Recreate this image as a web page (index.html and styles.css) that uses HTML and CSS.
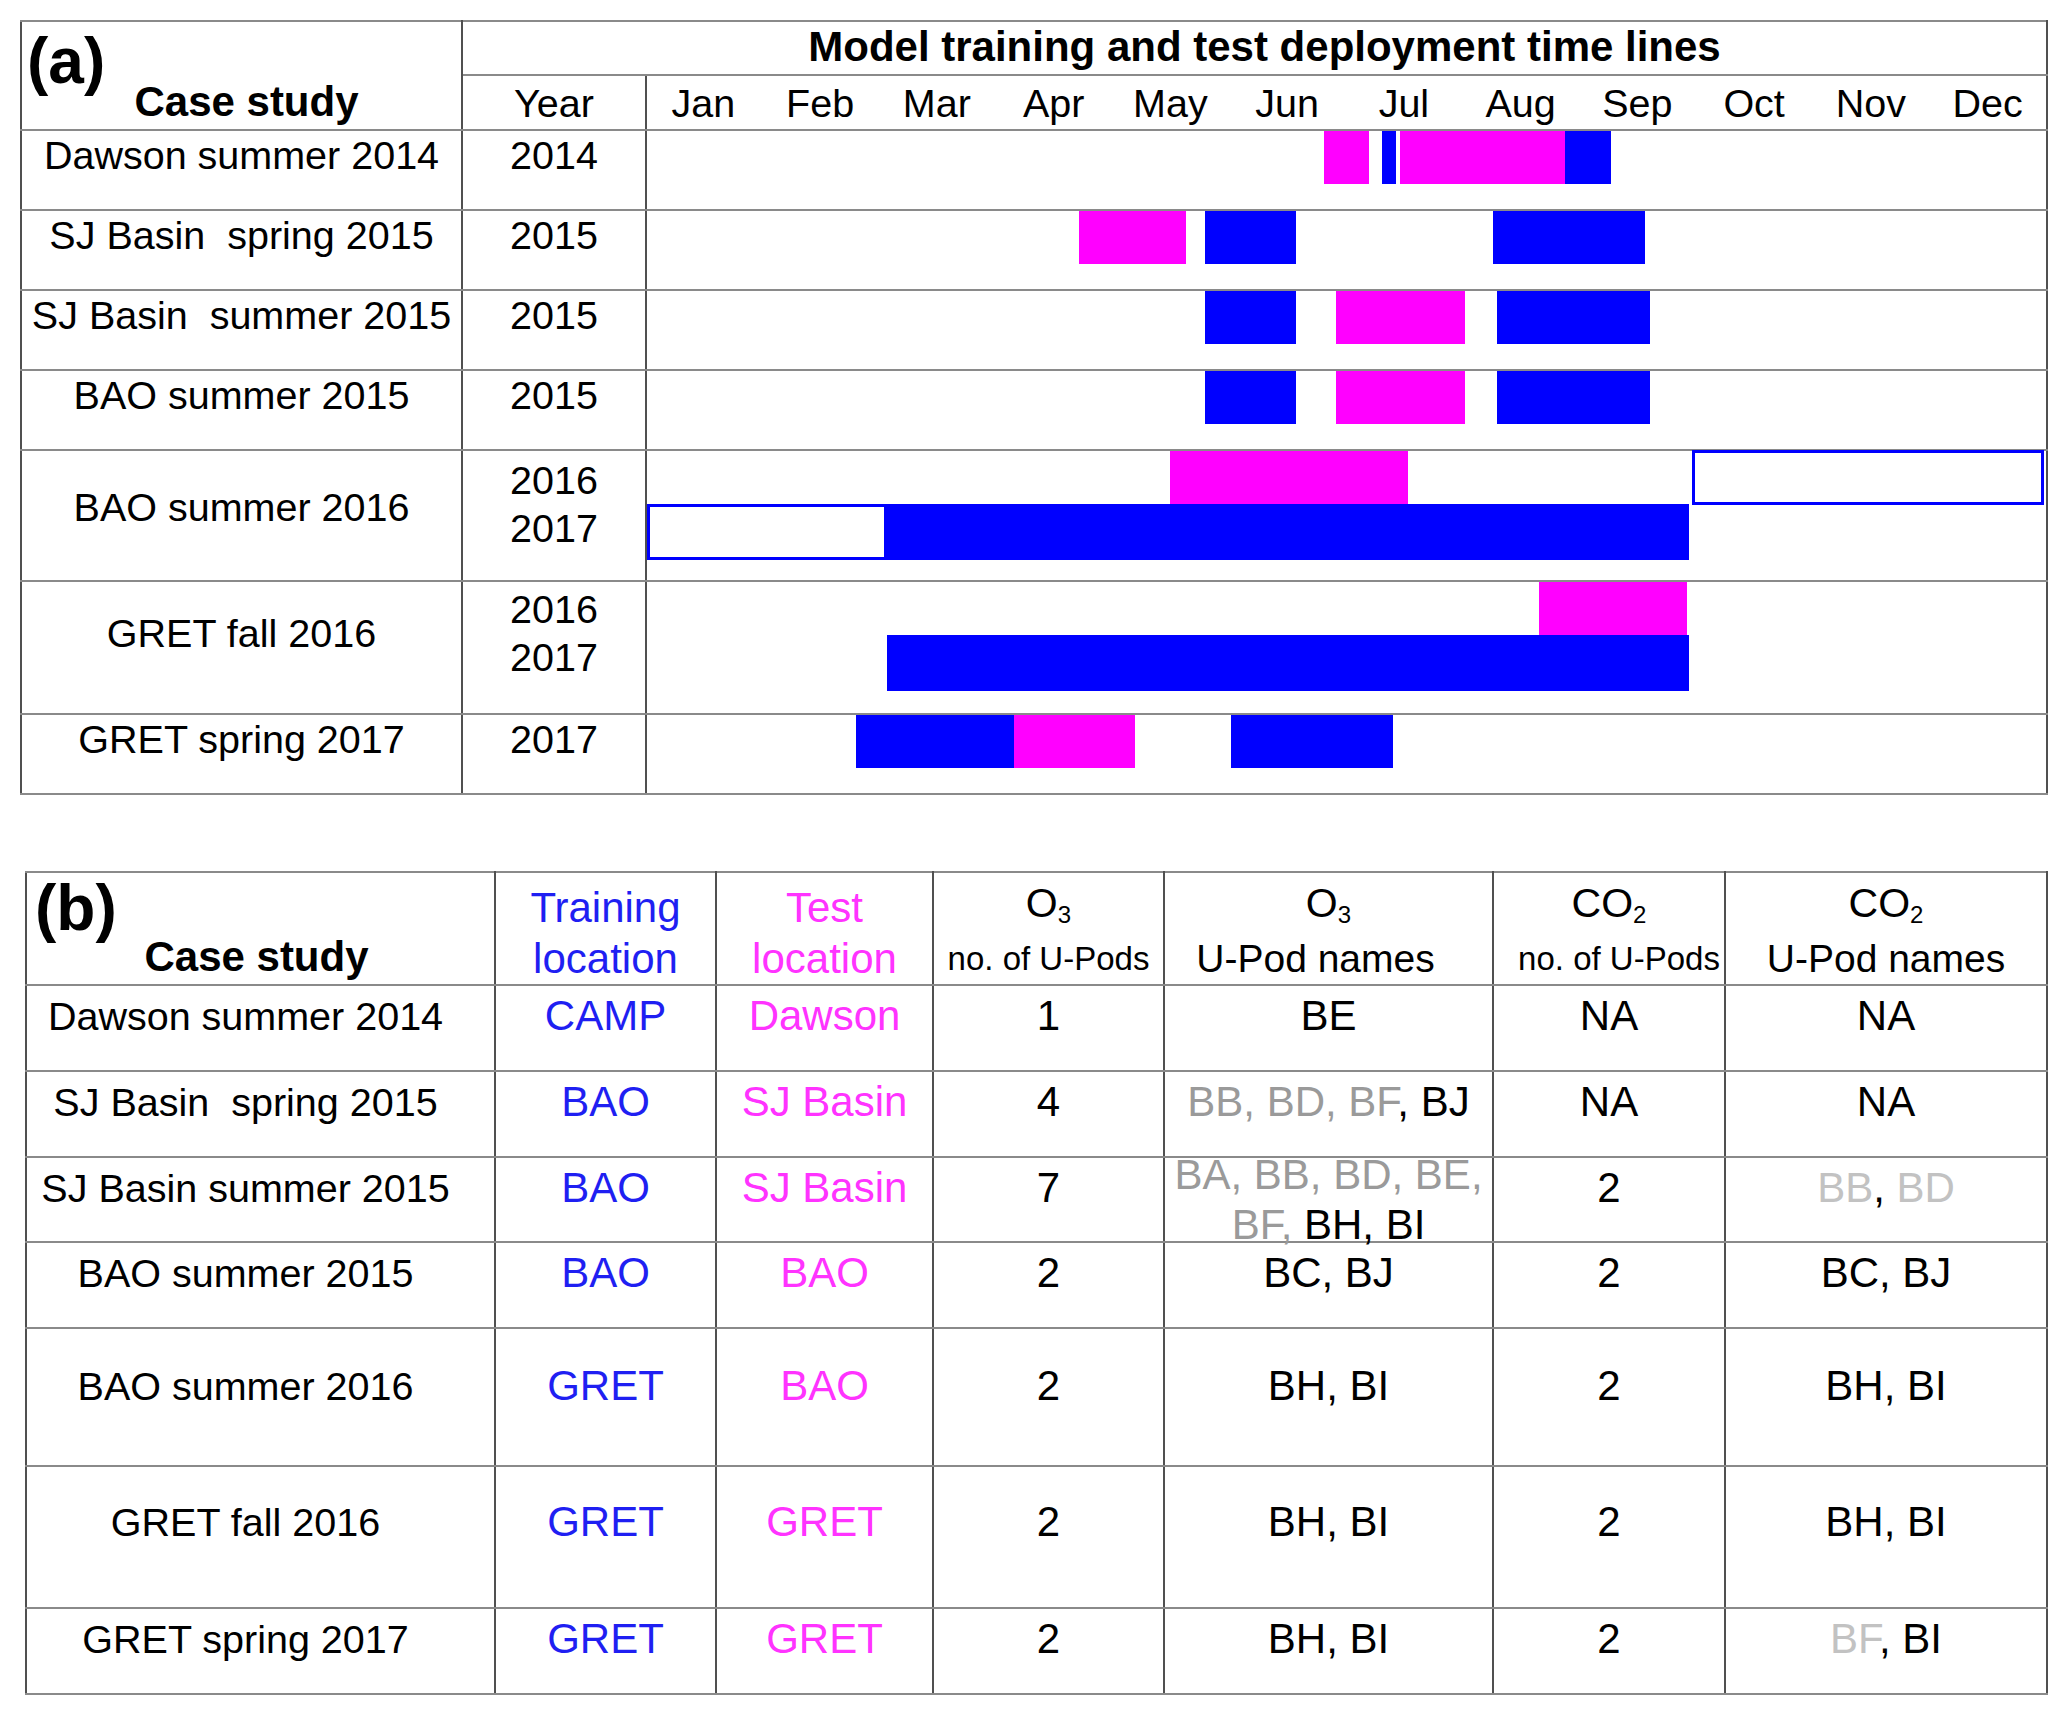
FILE: index.html
```html
<!DOCTYPE html>
<html lang="en">
<head>
<meta charset="utf-8">
<title>Model training and test deployment time lines</title>
<link rel="stylesheet" href="styles.css">
</head>
<body>
<main class="page">
  <table class="timeline">
    <colgroup><col class="c-case"><col class="c-year"><col class="c-chart"></colgroup>
    <tr class="title-row">
      <td class="case-head" rowspan="2"><span class="panel">(a)</span><span class="head-text">Case study</span></td>
      <td class="title" colspan="2">Model training and test deployment time lines</td>
    </tr>
    <tr class="month-row">
      <td class="year-head">Year</td>
      <td class="months-cell">
        <div class="months">
          <span>Jan</span><span>Feb</span><span>Mar</span><span>Apr</span><span>May</span><span>Jun</span>
          <span>Jul</span><span>Aug</span><span>Sep</span><span>Oct</span><span>Nov</span><span>Dec</span>
        </div>
      </td>
    </tr>
    <tr>
      <td class="label">Dawson summer 2014</td>
      <td class="year">2014</td>
      <td class="chart"><div class="track">
        <span class="bar test" style="left:677px;width:45px"></span>
        <span class="bar train" style="left:735px;width:14px"></span>
        <span class="bar test" style="left:753px;width:165px"></span>
        <span class="bar train" style="left:918px;width:46px"></span>
      </div></td>
    </tr>
    <tr>
      <td class="label">SJ Basin&nbsp; spring 2015</td>
      <td class="year">2015</td>
      <td class="chart"><div class="track">
        <span class="bar test" style="left:432px;width:107px"></span>
        <span class="bar train" style="left:558px;width:91px"></span>
        <span class="bar train" style="left:846px;width:152px"></span>
      </div></td>
    </tr>
    <tr>
      <td class="label">SJ Basin&nbsp; summer 2015</td>
      <td class="year">2015</td>
      <td class="chart"><div class="track">
        <span class="bar train" style="left:558px;width:91px"></span>
        <span class="bar test" style="left:689px;width:129px"></span>
        <span class="bar train" style="left:850px;width:153px"></span>
      </div></td>
    </tr>
    <tr>
      <td class="label">BAO summer 2015</td>
      <td class="year">2015</td>
      <td class="chart"><div class="track">
        <span class="bar train" style="left:558px;width:91px"></span>
        <span class="bar test" style="left:689px;width:129px"></span>
        <span class="bar train" style="left:850px;width:153px"></span>
      </div></td>
    </tr>
    <tr>
      <td class="label mid5">BAO summer 2016</td>
      <td class="year two">2016<br>2017</td>
      <td class="chart"><div class="track t5">
        <span class="bar test" style="left:523px;width:238px"></span>
        <span class="bar open high" style="left:1045px;width:352px"></span>
        <span class="bar open low" style="left:0px;width:240px"></span>
        <span class="bar train low" style="left:239px;width:803px"></span>
      </div></td>
    </tr>
    <tr>
      <td class="label mid6">GRET fall 2016</td>
      <td class="year two six">2016<br>2017</td>
      <td class="chart"><div class="track t6">
        <span class="bar test" style="left:892px;width:148px"></span>
        <span class="bar train low" style="left:240px;width:802px"></span>
      </div></td>
    </tr>
    <tr>
      <td class="label">GRET spring 2017</td>
      <td class="year">2017</td>
      <td class="chart"><div class="track">
        <span class="bar train" style="left:209px;width:158px"></span>
        <span class="bar test" style="left:367px;width:121px"></span>
        <span class="bar train" style="left:584px;width:162px"></span>
      </div></td>
    </tr>
  </table>

  <table class="summary">
    <colgroup>
      <col class="s-case"><col class="s-train"><col class="s-test"><col class="s-o3n">
      <col class="s-o3p"><col class="s-co2n"><col class="s-co2p">
    </colgroup>
    <tr class="head">
      <td class="case-head"><span class="panel">(b)</span><span class="head-text">Case study</span></td>
      <td class="blue"><div class="l1">Training</div><div class="l2">location</div></td>
      <td class="pink"><div class="l1">Test</div><div class="l2">location</div></td>
      <td><div class="l1 chem">O<sub>3</sub></div><div class="l2 small">no. of U-Pods</div></td>
      <td><div class="l1 chem">O<sub>3</sub></div><div class="l2 names shift-left">U-Pod names</div></td>
      <td><div class="l1 chem">CO<sub>2</sub></div><div class="l2 small shift-right">no. of U-Pods</div></td>
      <td><div class="l1 chem">CO<sub>2</sub></div><div class="l2 names">U-Pod names</div></td>
    </tr>
    <tr class="r86">
      <td class="label">Dawson summer 2014</td>
      <td class="blue">CAMP</td>
      <td class="pink">Dawson</td>
      <td>1</td>
      <td>BE</td>
      <td>NA</td>
      <td>NA</td>
    </tr>
    <tr class="r86">
      <td class="label">SJ Basin&nbsp; spring 2015</td>
      <td class="blue">BAO</td>
      <td class="pink">SJ Basin</td>
      <td>4</td>
      <td><span class="g1">BB, BD, BF</span>, BJ</td>
      <td>NA</td>
      <td>NA</td>
    </tr>
    <tr class="r85">
      <td class="label">SJ Basin summer 2015</td>
      <td class="blue">BAO</td>
      <td class="pink">SJ Basin</td>
      <td>7</td>
      <td class="squeeze"><div class="wrap2"><span class="g1">BA, BB, BD, BE,<br>BF,</span> BH, BI</div></td>
      <td>2</td>
      <td><span class="g2">BB</span>, <span class="g2">BD</span></td>
    </tr>
    <tr class="r86">
      <td class="label">BAO summer 2015</td>
      <td class="blue">BAO</td>
      <td class="pink">BAO</td>
      <td>2</td>
      <td>BC, BJ</td>
      <td>2</td>
      <td>BC, BJ</td>
    </tr>
    <tr class="r138">
      <td class="label">BAO summer 2016</td>
      <td class="blue">GRET</td>
      <td class="pink">BAO</td>
      <td>2</td>
      <td>BH, BI</td>
      <td>2</td>
      <td>BH, BI</td>
    </tr>
    <tr class="r142">
      <td class="label">GRET fall 2016</td>
      <td class="blue">GRET</td>
      <td class="pink">GRET</td>
      <td>2</td>
      <td>BH, BI</td>
      <td>2</td>
      <td>BH, BI</td>
    </tr>
    <tr class="r86 last">
      <td class="label">GRET spring 2017</td>
      <td class="blue">GRET</td>
      <td class="pink">GRET</td>
      <td>2</td>
      <td>BH, BI</td>
      <td>2</td>
      <td><span class="g2">BF</span>, BI</td>
    </tr>
  </table>
</main>
</body>
</html>
```

FILE: styles.css
```css
* { box-sizing: border-box; }

body {
  margin: 0;
  background: #ffffff;
  color: #000000;
  font-family: "Liberation Sans", Arial, sans-serif;
}

.page {
  display: flex;
  flex-direction: column;
  align-items: flex-start;
  padding-top: 20px;
  gap: 76px;
}

table {
  border-collapse: collapse;
  table-layout: fixed;
}

td {
  border-top: 2px solid #8a8a8a;
  border-bottom: 2px solid #8a8a8a;
  border-left: 2px solid #505050;
  border-right: 2px solid #505050;
  padding: 0;
  text-align: center;
  vertical-align: top;
  white-space: nowrap;
}

/* ---------- (a) timeline ---------- */
.timeline { width: 2026px; margin-left: 20px; }
.c-case { width: 441px; }
.c-year { width: 184px; }
.c-chart { width: 1401px; }

.timeline td { font-size: 39.5px; line-height: 48px; }

.case-head {
  position: relative;
  vertical-align: bottom;
  padding: 0 0 3px 10px;
}
.head-text { font-weight: bold; font-size: 42px; line-height: 48px; }

.panel {
  position: absolute;
  left: 5px;
  top: 7px;
  font-size: 64px;
  font-weight: bold;
  line-height: 1;
}

.timeline .title {
  font-size: 42px;
  font-weight: bold;
  padding: 1px 0 3px 20px;
}

.month-row td { padding-top: 3px; padding-bottom: 2px; }
.months {
  display: grid;
  grid-template-columns: repeat(12, 1fr);
  margin-left: -2px;
}

.label, .year { padding-top: 0; }
.label.mid5 { padding-top: 32px; }
.label.mid6 { padding-top: 27px; }
.year.two { padding-top: 5px; }
.year.two.six { padding-top: 3px; }

.chart { padding: 0; }
.track { position: relative; height: 78px; }
.track.t5 { height: 129px; }
.track.t6 { height: 131px; }

.bar { position: absolute; top: 0; height: 53px; }
.train { background: #0000ff; }
.test { background: #ff00ff; }
.open { border: 3px solid #0000ff; background: #ffffff; }
.high { top: -1px; height: 55px; }
.low { top: 53px; height: 56px; }

/* ---------- (b) summary ---------- */
.summary { width: 2021px; margin-left: 25px; }
.s-case { width: 469px; }
.s-train { width: 221px; }
.s-test { width: 217px; }
.s-o3n { width: 231px; }
.s-o3p { width: 329px; }
.s-co2n { width: 232px; }
.s-co2p { width: 322px; }

.summary td { font-size: 42px; line-height: 48px; padding-top: 6px; }
.summary .label { font-size: 39.5px; padding-right: 30px; }

.summary .head { height: 113px; }
.summary .head td { vertical-align: bottom; padding: 0 0 1px; }
.summary .head .case-head { padding: 0 8px 3px 0; }
.summary .panel { left: 8px; top: 3px; font-size: 64px; }

.l1 { margin-bottom: 3px; }
.l1.chem { margin-bottom: 8px; font-size: 41px; }
.l2.small { font-size: 33px; }
.l2.names { font-size: 39px; }
.shift-left { padding-right: 26px; }
.shift-right { padding-left: 20px; }

sub {
  font-size: 24px;
  line-height: 0;
  vertical-align: -6px;
}

.blue { color: #1f1ff2; }
.pink { color: #ff33ff; }
.g1 { color: #9a9a9a; }
.g2 { color: #c2c2c2; }

.r85 { height: 85px; }
.r86 { height: 86px; }
.r138 { height: 138px; }
.r142 { height: 142px; }
.summary .r138 td { padding-top: 33px; }
.summary .r142 td { padding-top: 31px; }

.summary td.squeeze { padding-top: 0; }
.wrap2 { line-height: 50px; margin: -8px 0 -20px; }
```
